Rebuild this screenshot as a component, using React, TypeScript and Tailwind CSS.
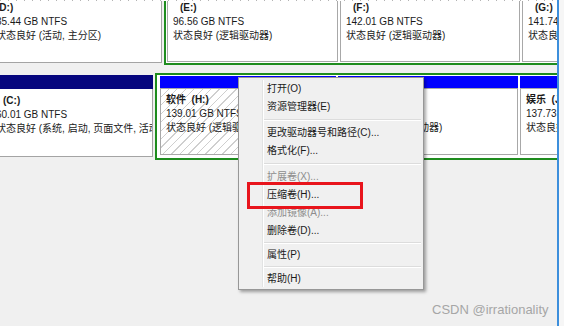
import React from 'react'

const txt = 'leading-[14px] whitespace-pre text-[#1a1a1a]'
const hatch = 'bg-[repeating-linear-gradient(135deg,#ffffff_0px,#ffffff_5px,#cfcfcf_5px,#cfcfcf_6px)]'

type Part = { label: string; size: string; status: string; indent?: boolean }

const Lines = ({ p }: { p: Part }) => (
	<>
		<div className={`${txt} font-bold ${p.indent ? 'ml-[7px]' : ''}`}>{p.label}</div>
		<div className={txt}>{p.size}</div>
		<div className={txt}>{p.status}</div>
	</>
)

const MenuItem = ({ text, disabled }: { text: string; disabled?: boolean }) => (
	<div className={`h-[18px] leading-[18px] pl-[28px] whitespace-nowrap ${disabled ? 'text-[#8d8d8d]' : 'text-[#1a1a1a]'}`}>{text}</div>
)

const Sep = ({ h }: { h: string }) => (
	<div className={`${h} flex flex-col justify-center pl-[25px] pr-[2px]`}>
		<div className='h-[1px] bg-[#dcdcdc]' />
		<div className='h-[1px] bg-white' />
	</div>
)

const App = () => {
	return (
		<div className="relative w-[564px] h-[326px] overflow-hidden bg-[#f0f0f0] text-[10px] font-['Liberation_Sans','Noto_Sans_CJK_SC',sans-serif]">
			<div className='flex h-full'>
				<div className='w-[557px] flex flex-col overflow-hidden'>
					{/* top edge */}
					<div className='h-[1px] bg-[repeating-linear-gradient(90deg,#b4b4b4_0px,#b4b4b4_1px,#ffffff_1px,#ffffff_8px)]' />

					{/* upper disk row */}
					<div className='flex h-[64px]'>
						<div className='w-[162px] h-[62px] shrink-0 bg-white border-r border-b border-[#a4a4a4] overflow-hidden'>
							<div className='-ml-[4px]'>
								<Lines p={{ label: '(D:)', size: '35.44 GB NTFS', status: '状态良好 (活动, 主分区)' }} />
							</div>
						</div>
						<div className='ml-[2px] shrink-0 w-[420px] flex gap-[2px] bg-white border-l-2 border-b-2 border-[#1e8c1e] pl-[1px] pb-[1px]'>
							<div className='w-[171px] shrink-0 border-x border-b border-[#a8a8a8] pl-[5px] overflow-hidden'>
								<Lines p={{ label: '(E:)', size: '96.56 GB NTFS', status: '状态良好 (逻辑驱动器)', indent: true }} />
							</div>
							<div className='w-[180px] shrink-0 border-x border-b border-[#a8a8a8] pl-[5px] overflow-hidden'>
								<Lines p={{ label: '(F:)', size: '142.01 GB NTFS', status: '状态良好 (逻辑驱动器)', indent: true }} />
							</div>
							<div className='w-[60px] shrink-0 border-x border-b border-[#a8a8a8] pl-[5px] overflow-hidden'>
								<Lines p={{ label: '(G:)', size: '141.74 GB NTFS', status: '状态良好 (逻辑驱动器)', indent: true }} />
							</div>
						</div>
					</div>

					{/* lower disk row */}
					<div className='flex mt-[8px]'>
						<div className='w-[153px] shrink-0 mt-[2px] flex flex-col'>
							<div className='h-[14px] bg-[#06067e]' />
							<div className='h-[68px] bg-white border-r border-b border-[#a4a4a4] pt-[5px] overflow-hidden'>
								<div className='-ml-[4px]'>
									<Lines p={{ label: '(C:)', size: '60.01 GB NTFS', status: '状态良好 (系统, 启动, 页面文件, 活动)', indent: true }} />
								</div>
							</div>
						</div>
						<div className='ml-[2px] shrink-0 w-[420px] h-[87px] flex gap-[2px] bg-white border-t-2 border-l-2 border-b-2 border-[#1e8c1e] pl-[3px] pt-[1px] pb-[1px]'>
							<div className='w-[176px] shrink-0 flex flex-col'>
								<div className='h-[12px] bg-[#0000ff]' />
								<div className={`flex-1 mb-[2px] border border-[#a8a8a8] ${hatch} pl-[5px] pt-[4px] overflow-hidden`}>
									<Lines p={{ label: '软件  (H:)', size: '139.01 GB NTFS', status: '状态良好 (逻辑驱动器)' }} />
								</div>
							</div>
							<div className='w-[180px] shrink-0 flex flex-col'>
								<div className='h-[12px] bg-[#0000ff]' />
								<div className='flex-1 mb-[2px] border border-[#a8a8a8] bg-white pl-[4px] pt-[32px] overflow-hidden'>
									<div className={txt}>状态良好 (逻辑驱动器)</div>
								</div>
							</div>
							<div className='w-[60px] shrink-0 flex flex-col'>
								<div className='h-[12px] bg-[#0000ff]' />
								<div className='flex-1 mb-[2px] border border-[#a8a8a8] bg-white pl-[5px] pt-[4px] overflow-hidden'>
									<Lines p={{ label: '娱乐  (J:)', size: '137.73 GB NTFS', status: '状态良好 (逻辑驱动器)' }} />
								</div>
							</div>
						</div>
					</div>
				</div>
				<div className='w-[2px] bg-[#3d8fdc]' />
				<div className='flex-1 bg-[#f6f6f6]' />
			</div>

			{/* context menu */}
			<div className='absolute left-[238px] top-[77px] w-[186px] h-[213px] bg-[#f0f0f0] border border-[#979797] shadow-[2px_2px_3px_rgba(0,0,0,0.35)] pt-[2px]'>
				<div className='absolute left-[23px] top-[2px] bottom-[2px] w-[2px] flex'>
					<div className='w-[1px] bg-[#e2e3e3]' />
					<div className='w-[1px] bg-white' />
				</div>
				<div className='relative flex flex-col'>
					<MenuItem text='打开(O)' />
					<MenuItem text='资源管理器(E)' />
					<Sep h='h-[8px]' />
					<MenuItem text='更改驱动器号和路径(C)...' />
					<MenuItem text='格式化(F)...' />
					<Sep h='h-[8px]' />
					<MenuItem text='扩展卷(X)...' disabled />
					<MenuItem text='压缩卷(H)...' />
					<MenuItem text='添加镜像(A)...' disabled />
					<MenuItem text='删除卷(D)...' />
					<Sep h='h-[6px]' />
					<MenuItem text='属性(P)' />
					<Sep h='h-[6px]' />
					<MenuItem text='帮助(H)' />
				</div>
			</div>

			{/* annotation */}
			<div className='absolute left-[247px] top-[182px] w-[116px] h-[27px] border-[3px] border-[#e8141c]' />

			<div className="absolute left-[432px] top-[302px] text-[13px] leading-[16px] text-[#a6a6a6] font-['Liberation_Sans',sans-serif]">CSDN @irrationality</div>
		</div>
	)
}

export default App
